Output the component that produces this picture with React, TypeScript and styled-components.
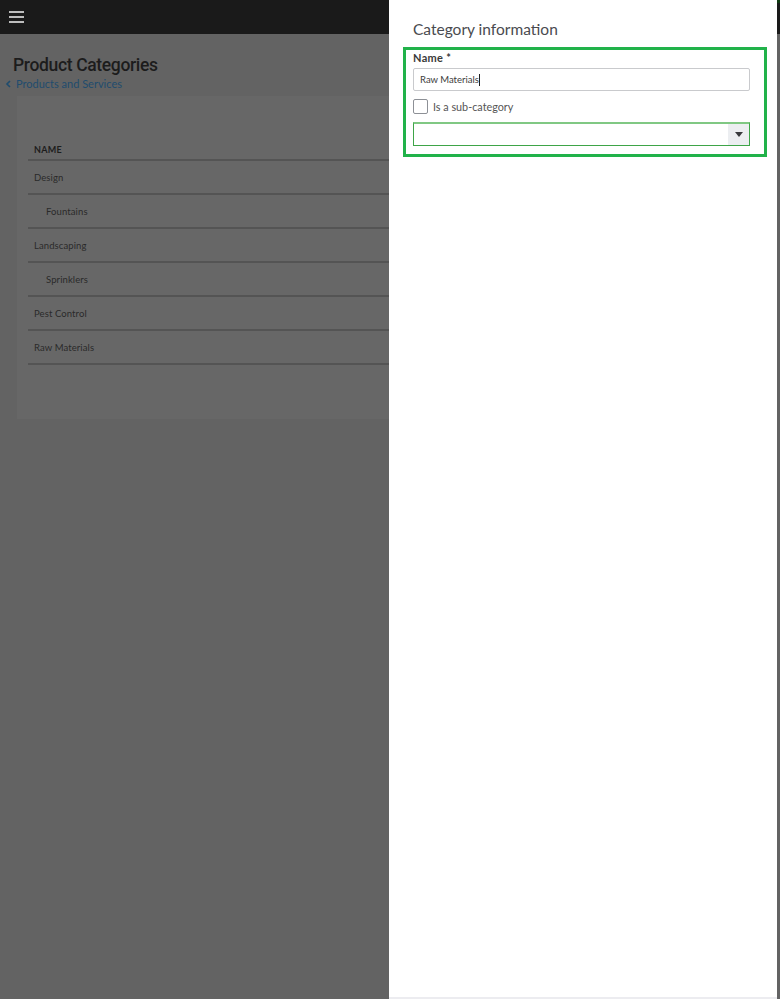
import React from "react";
import styled, { createGlobalStyle } from "styled-components";

const Global = createGlobalStyle`
  html, body { margin: 0; padding: 0; }
  body { width: 780px; height: 999px; overflow: hidden; background: #636363; font-family: Lato, "Noto Sans", sans-serif; }
`;

const Page = styled.div`
  width: 780px;
  height: 999px;
  background: #636363;
  display: flex;
  flex-direction: column;
`;

const TopBar = styled.header`
  height: 34px;
  background: #1a1a1a;
  display: flex;
  align-items: center;
  padding-left: 9px;
  flex-shrink: 0;
`;

const Burger = styled.div`
  width: 15px;
  display: flex;
  flex-direction: column;
  gap: 3px;
  span { display: block; height: 2px; background: #bdbdbd; }
`;

const Header = styled.div`
  padding: 21px 0 0 13px;
  display: flex;
  flex-direction: column;
`;

const Title = styled.h1`
  margin: 0;
  font-family: Roboto, sans-serif;
  font-weight: 500;
  font-size: 17.5px;
  line-height: 20px;
  color: #1c1c1c;
  letter-spacing: -0.35px;
`;

const Back = styled.a`
  margin: 2px 0 0 -8px;
  font-size: 11px;
  color: #1f4c6e;
  display: flex;
  align-items: center;
  gap: 5px;
  line-height: 13px;
`;

const Card = styled.section`
  margin: 6px 0 0 17px;
  background: #676767;
  height: 323px;
  padding: 48px 0 0 11px;
  box-sizing: border-box;
`;

const Row = styled.div<{ $head?: boolean; $indent?: boolean }>`
  display: grid;
  grid-template-columns: 323px 1fr;
  height: ${(p) => (p.$head ? "15px" : "32px")};
  border-bottom: 2px solid #545454;
  align-items: center;
  font-size: ${(p) => (p.$head ? "9px" : "9.5px")};
  font-weight: ${(p) => (p.$head ? 700 : 400)};
  color: ${(p) => (p.$head ? "#1d1d1d" : "#2a2a2a")};
  letter-spacing: ${(p) => (p.$head ? "0.3px" : "0.1px")};
  span { padding-left: ${(p) => (p.$indent ? "18px" : "6px")}; padding-bottom: ${(p) => (p.$head ? "6px" : "0")}; }
`;

const Drawer = styled.aside`
  position: fixed;
  top: 0;
  right: 3px;
  width: 388px;
  height: 999px;
  background: #fff;
  border-bottom: 2px solid #ececf0;
  padding: 19px 0 0 14px;
  box-sizing: border-box;
  display: flex;
  flex-direction: column;
`;

const DrawerTitle = styled.h2`
  margin: 0 0 0 10px;
  font-weight: 400;
  font-size: 15.5px;
  line-height: 20px;
  height: 20px;
  color: #4a4b4f;
`;

const Highlight = styled.div`
  margin-top: 8px;
  width: 364px;
  height: 110px;
  border: 3px solid #21b24a;
  padding: 1px 0 0 7px;
  box-sizing: border-box;
  display: flex;
  flex-direction: column;
`;

const Label = styled.label`
  display: block;
  height: 14px;
  font-size: 11px;
  font-weight: 700;
  color: #3a3a3a;
  line-height: 14px;
  letter-spacing: 0.3px;
`;

const Input = styled.div`
  margin-top: 3px;
  width: 337px;
  height: 23px;
  box-sizing: border-box;
  border: 1px solid #c9cacd;
  border-radius: 2px;
  font-size: 9.5px;
  color: #3c3c3c;
  display: flex;
  align-items: center;
  padding-left: 6px;
  &::after { content: ""; width: 1px; height: 12px; background: #222; }
`;

const CheckRow = styled.div`
  margin-top: 8px;
  height: 15px;
  display: flex;
  align-items: center;
  gap: 5px;
  font-size: 10.8px;
  color: #555;
`;

const Box = styled.span`
  width: 15px;
  height: 15px;
  box-sizing: border-box;
  border: 1px solid #8d9096;
  border-radius: 2px;
`;

const Select = styled.div`
  margin-top: 8px;
  width: 337px;
  height: 24px;
  box-sizing: border-box;
  border: 1px solid #3ea448;
  border-top: 2px solid #80c883;
  display: flex;
  justify-content: flex-end;
`;

const Caret = styled.div`
  width: 21px;
  background: #eceef1;
  display: flex;
  align-items: center;
  justify-content: center;
`;

const EdgeStrip = styled.div`
  position: fixed;
  top: 0;
  right: 0;
  width: 3px;
  height: 999px;
  background: linear-gradient(#0f3b12 0 3px, #1a1a1a 3px 34px, #636363 34px);
`;

const rows: [string, boolean][] = [
  ["Design", false],
  ["Fountains", true],
  ["Landscaping", false],
  ["Sprinklers", true],
  ["Pest Control", false],
  ["Raw Materials", false],
];

export default function App() {
  return (
    <>
      <Global />
      <Page>
        <TopBar>
          <Burger><span /><span /><span /></Burger>
        </TopBar>
        <Header>
          <Title>Product Categories</Title>
          <Back>
            <svg width="6" height="8" viewBox="0 0 6 8"><path d="M5 1 L2 4 L5 7" stroke="#1f4c6e" strokeWidth="1.6" fill="none" /></svg>
            Products and Services
          </Back>
        </Header>
        <Card>
          <Row $head><span>NAME</span><i /></Row>
          {rows.map(([n, ind]) => (
            <Row key={n} $indent={ind}><span>{n}</span><i /></Row>
          ))}
        </Card>
      </Page>
      <Drawer>
        <DrawerTitle>Category information</DrawerTitle>
        <Highlight>
          <Label>Name *</Label>
          <Input>Raw Materials</Input>
          <CheckRow><Box />Is a sub-category</CheckRow>
          <Select>
            <Caret>
              <svg width="8" height="5" viewBox="0 0 8 5"><path d="M0 0 H8 L4 5 Z" fill="#393a3d" /></svg>
            </Caret>
          </Select>
        </Highlight>
      </Drawer>
      <EdgeStrip />
    </>
  );
}
